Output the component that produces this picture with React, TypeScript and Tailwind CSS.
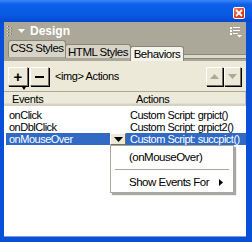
import type { ReactNode } from "react";

const ui = "font-['Liberation_Sans',Arial,sans-serif]";

function CloseBox() {
	return (
		<div className="flex h-[12px] w-[12px] items-center justify-center rounded-[2px] border border-white bg-[linear-gradient(135deg,#f08a6a_0%,#e04a24_45%,#c8341a_100%)]">
			<svg width="8" height="8" viewBox="0 0 8 8">
				<path d="M1 1 L7 7 M7 1 L1 7" stroke="#fff" strokeWidth="1.8" />
			</svg>
		</div>
	);
}

function Gripper() {
	return (
		<svg width="6" height="10" viewBox="0 0 6 10">
			{[0, 3, 6, 9].map((y) => (
				<g key={y}>
					<rect x="0" y={y} width="1" height="1" fill="#e6e3d6" />
					<rect x="1" y={y} width="1" height="1" fill="#6f6c60" />
					<rect x="3" y={y + 1.5} width="1" height="1" fill="#e6e3d6" />
					<rect x="4" y={y + 1.5} width="1" height="1" fill="#6f6c60" />
				</g>
			))}
		</svg>
	);
}

function OptionsIcon() {
	return (
		<svg width="12" height="11" viewBox="0 0 12 11">
			<rect x="0" y="0" width="2" height="2" fill="#fff" />
			<rect x="3" y="0" width="7" height="1" fill="#fff" />
			<rect x="0" y="3" width="2" height="2" fill="#fff" />
			<rect x="3" y="3" width="7" height="1" fill="#fff" />
			<rect x="0" y="6" width="2" height="2" fill="#fff" />
			<rect x="3" y="6" width="5" height="1" fill="#fff" />
			<path d="M7 8 L12 8 L9.5 10.5 Z" fill="#fff" />
		</svg>
	);
}

function RaisedButton({ children, w }: { children: ReactNode; w: string }) {
	return (
		<div className={`flex h-[19px] ${w} items-center justify-center border border-t-white border-l-white border-r-[#716f64] border-b-[#716f64] bg-[#ece9d8] shadow-[1px_1px_0_#000]`}>
			{children}
		</div>
	);
}

function Tri({ up, color }: { up?: boolean; color: string }) {
	return (
		<svg width="9" height="5" viewBox="0 0 9 5">
			<path d={up ? "M0 5 L9 5 L4.5 0 Z" : "M0 0 L9 0 L4.5 5 Z"} fill={color} />
		</svg>
	);
}

const tab =
	"-ml-[1px] flex items-center justify-center whitespace-nowrap rounded-t-[3px] border border-b-0 border-[#8a877a] text-[11.5px] leading-none tracking-[-0.5px] text-black";

export default function App() {
	return (
		<div className={`relative flex h-[242px] w-[252px] flex-col overflow-hidden bg-[#0a4fd8] ${ui}`}>
			{/* title bar */}
			<div className="flex h-[22px] shrink-0 items-start justify-end bg-[linear-gradient(180deg,#3d87f4_0%,#0d60ea_20%,#0858e2_70%,#0748cf_100%)] pr-[7px] pt-[7px]">
				<CloseBox />
			</div>

			<div className="flex min-h-0 flex-1 pb-[5px] pl-[4px] pr-[6px]">
				<div className="flex min-w-0 flex-1 flex-col border-b border-[#7f9de0] bg-white">
					{/* panel header */}
					<div className="flex h-[18px] shrink-0 items-center bg-[#aca899] pl-[3px] pr-[4px]">
						<Gripper />
						<svg className="ml-[5px]" width="7" height="4" viewBox="0 0 7 4">
							<path d="M0 0 L7 0 L3.5 4 Z" fill="#fff" />
						</svg>
						<span className="ml-[5px] text-[12px] font-bold leading-none text-white">Design</span>
						<div className="ml-auto mt-[2px]">
							<OptionsIcon />
						</div>
					</div>

					{/* tabs */}
					<div className="flex h-[21px] shrink-0 items-end bg-[#aca899] pl-[5px]">
						<div className={`${tab} mb-[4px] h-[17px] w-[58px] bg-[#d7d4c7]`}>CSS Styles</div>
						<div className={`${tab} mb-[3px] h-[14px] w-[66px] bg-[#d7d4c7] pt-[2px]`}>HTML Styles</div>
						<div className={`${tab} h-[15px] w-[54px] bg-[#f4f3ec] pt-[1px]`}>Behaviors</div>
						<div className="mb-[2px] h-[5px] flex-1 border-y border-[#8a877a] bg-[#dcd9cd]" />
					</div>

					{/* toolbar */}
					<div className="flex h-[30px] shrink-0 items-center bg-[#ece9d8] pl-[4px] pr-[5px] pt-[1px]">
						<RaisedButton w="w-[20px]">
							<div className="relative">
								<span className="text-[15px] font-bold leading-none text-black">+</span>
								<svg className="absolute -bottom-[1px] -right-[4px]" width="4" height="3" viewBox="0 0 4 3">
									<path d="M0 0 L4 0 L2 3 Z" fill="#000" />
								</svg>
							</div>
						</RaisedButton>
						<div className="ml-[2px]">
							<RaisedButton w="w-[19px]">
								<div className="h-[2px] w-[9px] bg-black" />
							</RaisedButton>
						</div>
						<span className="ml-[6px] whitespace-nowrap text-[11px] leading-none tracking-[-0.4px] text-black">&lt;img&gt; Actions</span>
						<div className="ml-auto flex gap-[1px]">
							<RaisedButton w="w-[17px]">
								<Tri up color="#aca899" />
							</RaisedButton>
							<RaisedButton w="w-[17px]">
								<Tri color="#aca899" />
							</RaisedButton>
						</div>
					</div>

					{/* list header */}
					<div className="flex h-[15px] shrink-0 border-t border-[#aca899] bg-[#ebeadb] text-[11px] leading-none tracking-[-0.4px] text-black shadow-[inset_0_-2px_0_#d6d2c2,inset_0_-3px_0_#e2dfd0]">
						<div className="flex w-[120px] shrink-0 items-center pl-[8px]">Events</div>
						<div className="flex flex-1 items-center border-r border-[#c7c5b2] pl-[12px]">Actions</div>
					</div>

					{/* rows */}
					<div className="flex flex-1 flex-col whitespace-nowrap pt-[3px] text-[11px] leading-none tracking-[-0.5px] text-black">
						<div className="flex h-[12px] items-center">
							<div className="w-[122px] shrink-0 pl-[5px]">onClick</div>
							<div className="pl-[4px]">Custom Script: grpict()</div>
						</div>
						<div className="flex h-[12px] items-center">
							<div className="w-[122px] shrink-0 pl-[5px]">onDblClick</div>
							<div className="pl-[4px]">Custom Script: grpict2()</div>
						</div>
						<div className="flex h-[12px] items-center">
							<div className="ml-[2px] flex h-full w-[104px] shrink-0 items-center bg-[#316ac5] pl-[3px] text-white">onMouseOver</div>
							<div className="flex h-full w-[16px] shrink-0 items-center justify-center border border-t-white border-l-white border-r-[#716f64] border-b-[#716f64] bg-[#ece9d8]">
								<Tri color="#000" />
							</div>
							<div className="flex h-full flex-1 items-center bg-[#316ac5] pl-[4px] text-white">Custom Script: succpict()</div>
						</div>
					</div>
				</div>
			</div>

			{/* popup menu */}
			<div className="absolute left-[110px] top-[145px] flex h-[48px] w-[124px] flex-col whitespace-nowrap border border-[#aca899] bg-white text-[11.5px] leading-none tracking-[-0.5px] text-black shadow-[2px_2px_1px_rgba(0,0,0,0.35)]">
				<div className="flex h-[19px] items-center pl-[18px] pt-[4px]">(onMouseOver)</div>
				<div className="mx-[4px] my-[4px] h-px bg-[#aca899]" />
				<div className="flex h-[17px] items-center pl-[18px] pr-[10px]">
					<span>Show Events For</span>
					<svg className="ml-auto" width="4" height="7" viewBox="0 0 4 7">
						<path d="M0 0 L4 3.5 L0 7 Z" fill="#000" />
					</svg>
				</div>
			</div>
		</div>
	);
}
